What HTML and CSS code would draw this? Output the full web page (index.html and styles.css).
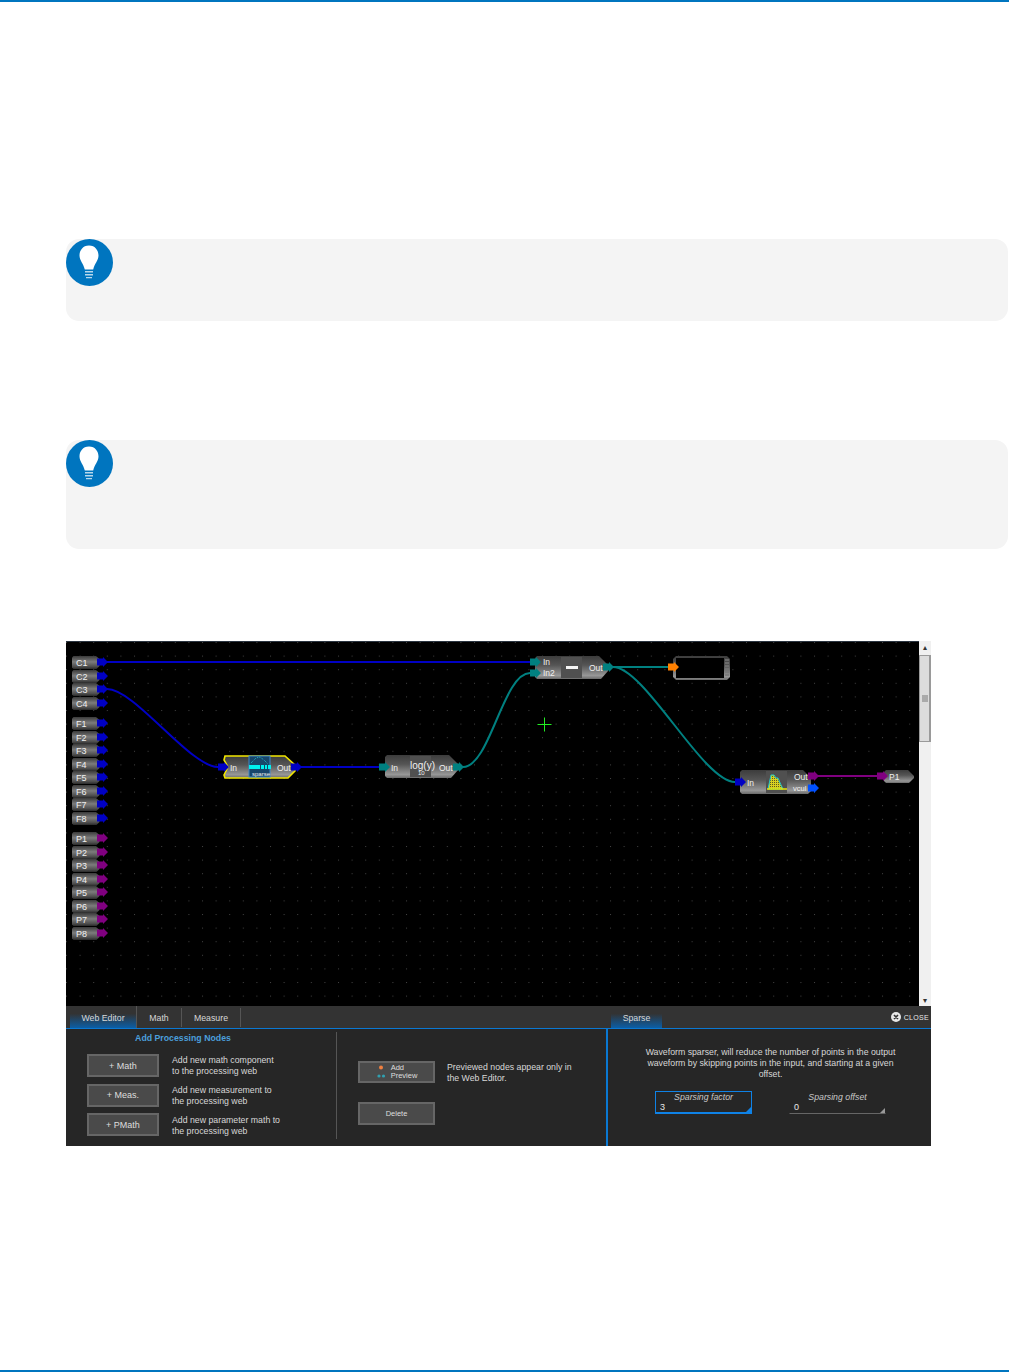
FILE: index.html
```html
<!DOCTYPE html>
<html lang="en">
<head>
<meta charset="utf-8">
<title>Processing Web Editor</title>
<link rel="stylesheet" href="styles.css">
</head>
<body>
<header class="top-rule"></header>
<main class="page">
  <aside class="callout callout-short">
    <svg class="bulb" viewBox="0 0 47 47" aria-hidden="true">
      <circle cx="23.5" cy="23.5" r="23.5" class="bulb-disc"/>
      <path class="bulb-glass" d="M23 6.5C16.8 6.5 13.5 11.5 13.5 16.5C13.5 21.5 17.5 24.5 18.8 30.5H27.2C28.5 24.5 32.5 21.5 32.5 16.5C32.5 11.5 29.2 6.5 23 6.5Z"/>
      <path class="bulb-base" d="M19 32H27V33.5H19ZM19 35H27V36.5H19ZM20 38H26V39.2H20Z"/>
    </svg>
  </aside>
  <aside class="callout callout-tall">
    <svg class="bulb" viewBox="0 0 47 47" aria-hidden="true">
      <circle cx="23.5" cy="23.5" r="23.5" class="bulb-disc"/>
      <path class="bulb-glass" d="M23 6.5C16.8 6.5 13.5 11.5 13.5 16.5C13.5 21.5 17.5 24.5 18.8 30.5H27.2C28.5 24.5 32.5 21.5 32.5 16.5C32.5 11.5 29.2 6.5 23 6.5Z"/>
      <path class="bulb-base" d="M19 32H27V33.5H19ZM19 35H27V36.5H19ZM20 38H26V39.2H20Z"/>
    </svg>
  </aside>

  <figure class="shot">
    <div class="canvas-row">
      <svg class="canvas" viewBox="66 641 853 365" width="853" height="365" role="img" aria-label="Processing web diagram">
        <defs>
          <pattern id="dots" x="79.6" y="642" width="13.6" height="13.6" patternUnits="userSpaceOnUse">
            <rect x="0" y="0" width="1" height="1" class="dot"/>
          </pattern>
          <pattern id="histdots" x="0" y="0" width="2" height="2" patternUnits="userSpaceOnUse">
            <rect width="2" height="2" class="hist-yellow"/>
            <rect width="1" height="1" class="hist-dark"/>
          </pattern>
          <linearGradient id="pinfill" x1="0" y1="0" x2="0" y2="1">
            <stop offset="0" stop-color="#3a3a3a"/>
            <stop offset=".45" stop-color="#7c7c7c"/>
            <stop offset=".8" stop-color="#505050"/>
            <stop offset="1" stop-color="#2a2a2a"/>
          </linearGradient>
          <linearGradient id="nodefill" x1="0" y1="0" x2="0" y2="1">
            <stop offset="0" stop-color="#3c3c3c"/>
            <stop offset=".4" stop-color="#555"/>
            <stop offset=".85" stop-color="#979797"/>
            <stop offset="1" stop-color="#6a6a6a"/>
          </linearGradient>
          <path id="arrow" d="M0-3.5H6V-5L11 0L6 5V3.5H0Z"/>
          <path id="pin" d="M0 1.5L1.5 0H24L27.5 3V10L24.5 13H1.5L0 11.5Z"/>
        </defs>
        <rect x="66" y="641" width="853" height="365" class="canvas-bg"/>
        <rect x="66" y="641" width="853" height="365" fill="url(#dots)"/>
        <rect x="66" y="641" width="853" height="1" class="canvas-edge"/>

        <g class="wires">
          <path class="wire blue" d="M107 662H530"/>
          <path class="wire blue" d="M107 689C135 689 190 767 218 767"/>
          <path class="wire blue" d="M300 767H380"/>
          <path class="wire teal" d="M463 767C490 767 503 673 530 673"/>
          <path class="wire teal" d="M612 667H668"/>
          <path class="wire teal" d="M613 667C645 667 703 782 735 782"/>
          <path class="wire purple" d="M818 776H878"/>
        </g>

        <g class="pins">
          <use href="#pin" x="72" y="656"/><text x="76" y="665.5">C1</text>
          <use href="#pin" x="72" y="670"/><text x="76" y="679.5">C2</text>
          <use href="#pin" x="72" y="683"/><text x="76" y="692.5">C3</text>
          <use href="#pin" x="72" y="697"/><text x="76" y="706.5">C4</text>
          <use href="#pin" x="72" y="717"/><text x="76" y="726.5">F1</text>
          <use href="#pin" x="72" y="731"/><text x="76" y="740.5">F2</text>
          <use href="#pin" x="72" y="744"/><text x="76" y="753.5">F3</text>
          <use href="#pin" x="72" y="758"/><text x="76" y="767.5">F4</text>
          <use href="#pin" x="72" y="771"/><text x="76" y="780.5">F5</text>
          <use href="#pin" x="72" y="785"/><text x="76" y="794.5">F6</text>
          <use href="#pin" x="72" y="798"/><text x="76" y="807.5">F7</text>
          <use href="#pin" x="72" y="812"/><text x="76" y="821.5">F8</text>
          <use href="#pin" x="72" y="832"/><text x="76" y="841.5">P1</text>
          <use href="#pin" x="72" y="846"/><text x="76" y="855.5">P2</text>
          <use href="#pin" x="72" y="859"/><text x="76" y="868.5">P3</text>
          <use href="#pin" x="72" y="873"/><text x="76" y="882.5">P4</text>
          <use href="#pin" x="72" y="886"/><text x="76" y="895.5">P5</text>
          <use href="#pin" x="72" y="900"/><text x="76" y="909.5">P6</text>
          <use href="#pin" x="72" y="913"/><text x="76" y="922.5">P7</text>
          <use href="#pin" x="72" y="927"/><text x="76" y="936.5">P8</text>
        </g>
        <g class="fill-blue">
          <use href="#arrow" x="97" y="662"/><use href="#arrow" x="97" y="676"/><use href="#arrow" x="97" y="689"/><use href="#arrow" x="97" y="703"/>
          <use href="#arrow" x="97" y="723"/><use href="#arrow" x="97" y="737"/><use href="#arrow" x="97" y="750"/><use href="#arrow" x="97" y="764"/>
          <use href="#arrow" x="97" y="777"/><use href="#arrow" x="97" y="791"/><use href="#arrow" x="97" y="804"/><use href="#arrow" x="97" y="818"/>
        </g>
        <g class="fill-purple">
          <use href="#arrow" x="97" y="838"/><use href="#arrow" x="97" y="852"/><use href="#arrow" x="97" y="865"/><use href="#arrow" x="97" y="879"/>
          <use href="#arrow" x="97" y="892"/><use href="#arrow" x="97" y="906"/><use href="#arrow" x="97" y="919"/><use href="#arrow" x="97" y="933"/>
        </g>

        <!-- sparse node -->
        <g class="node">
          <path class="node-selected" d="M225 756H285L295 765V771L288 778H225L224 775L228 767L224 760Z"/>
          <rect x="249" y="756" width="21" height="21" class="icon-sparse"/>
          <path class="icon-wave" d="M251 763L256 758L260 757L264 760L268 764"/>
          <rect x="249" y="765" width="22" height="4" class="icon-cyan"/>
          <path class="icon-gaps" d="M260.5 765V769M264.5 765V769M267.5 765V769"/>
          <text x="252" y="776" class="tiny">sparse</text>
          <text x="230" y="770.5">In</text><text x="277" y="770.5">Out</text>
          <use href="#arrow" class="fill-blue" x="218" y="767"/>
          <use href="#arrow" class="fill-blue" x="291" y="767"/>
        </g>

        <!-- log node -->
        <g class="node">
          <path class="node-body" d="M387 755H449L458 764V770L451 778H387L385 776V757Z"/>
          <rect x="410" y="756" width="21" height="21" class="icon-grey"/>
          <text x="410" y="769" class="log">log(y)</text>
          <text x="418" y="775" class="tiny">10</text>
          <text x="391" y="770.5">In</text><text x="439" y="770.5">Out</text>
          <use href="#arrow" class="fill-teal" x="379" y="767"/>
          <use href="#arrow" class="fill-teal" x="453" y="767"/>
        </g>

        <!-- minus node -->
        <g class="node">
          <path class="node-body" d="M537 656H599L608 665V671L601 679H537L535 677V658Z"/>
          <rect x="561" y="657" width="21" height="21" class="icon-grey"/>
          <rect x="566" y="666" width="12" height="3" class="icon-white"/>
          <text x="543" y="665">In</text><text x="543" y="676">In2</text><text x="589" y="670.5">Out</text>
          <use href="#arrow" class="fill-teal" x="530" y="662"/>
          <use href="#arrow" class="fill-teal" x="530" y="673"/>
          <use href="#arrow" class="fill-teal" x="603" y="667"/>
        </g>

        <!-- preview node -->
        <g class="node">
          <path class="node-body" d="M676 656H727L730 659V677L727 680H676L673 677V659Z"/>
          <rect x="676" y="658" width="48" height="20" class="canvas-bg"/>
          <path class="preview-ticks" d="M725 660H729M725 663H729M725 666H729M725 669H729M725 672H729M725 675H729"/>
          <use href="#arrow" class="fill-orange" x="668" y="667"/>
        </g>

        <!-- histogram node -->
        <g class="node">
          <path class="node-body" d="M742 770H803L811 778V791L808 794H742L740 792V772Z"/>
          <rect x="766" y="771" width="21" height="22" class="icon-grey"/>
          <path class="hist" d="M768 789L771 775H774L776 778H778L781 785L783 789Z"/>
          <path class="hist-axis" d="M767 789H787"/>
          <text x="747" y="786">In</text><text x="794" y="779.5">Out</text><text x="793" y="791" class="small">vcul</text>
          <use href="#arrow" class="fill-blue" x="735" y="782"/>
          <use href="#arrow" class="fill-purple" x="808" y="776"/>
          <use href="#arrow" class="fill-bright" x="808" y="788"/>
        </g>

        <!-- P1 output -->
        <g class="node">
          <path class="node-body" d="M886 770H908L914 776V778L909 783H886L884 781V772Z"/>
          <text x="889" y="780">P1</text>
          <use href="#arrow" class="fill-purple" x="877" y="776"/>
        </g>

        <path class="cursor" d="M537.5 724.5H551.5M544.5 717.5V731.5"/>
      </svg>
      <div class="scrollbar">
        <span class="scroll-arrow">&#9652;</span>
        <div class="scroll-thumb"><span class="scroll-grip"></span></div>
        <span class="scroll-arrow scroll-arrow-end">&#9662;</span>
      </div>
    </div>

    <section class="panel">
      <nav class="tabbar">
        <div class="tabs">
          <span class="tab tab-active tab-web">Web Editor</span>
          <span class="tab tab-math">Math</span>
          <span class="tab tab-measure">Measure</span>
        </div>
        <span class="tab tab-active tab-sparse">Sparse</span>
        <span class="close">
          <svg class="close-icon" viewBox="0 0 10 10" aria-hidden="true"><circle cx="5" cy="5" r="5" class="close-disc"/><path class="close-x" d="M3 3L7 7M7 3L3 7"/></svg>
          CLOSE
        </span>
      </nav>
      <div class="panel-body">
        <div class="left-pane">
          <div class="add-col">
            <h3 class="add-title">Add Processing Nodes</h3>
            <div class="add-row"><button class="btn">+ Math</button><p class="desc">Add new math component<br>to the processing web</p></div>
            <div class="add-row"><button class="btn">+ Meas.</button><p class="desc desc-nudge-1">Add new measurement to<br>the processing web</p></div>
            <div class="add-row"><button class="btn">+ PMath</button><p class="desc desc-nudge-2">Add new parameter math to<br>the processing web</p></div>
          </div>
          <div class="preview-col">
            <div class="preview-row">
              <button class="btn btn-wide btn-preview">
                <svg class="preview-icon" viewBox="0 0 10 14" aria-hidden="true"><circle cx="5" cy="2.5" r="2" class="pi-orange"/><circle cx="3" cy="11" r="1.6" class="pi-teal"/><circle cx="7.5" cy="11" r="1.6" class="pi-teal"/></svg>
                <span class="preview-label">Add<br>Preview</span>
              </button>
              <p class="desc desc-low">Previewed nodes appear only in<br>the Web Editor.</p>
            </div>
            <button class="btn btn-wide btn-delete">Delete</button>
          </div>
        </div>
        <div class="right-pane">
          <p class="sparse-desc">Waveform sparser, will reduce the number of points in the output<br>waveform by skipping points in the input, and starting at a given<br>offset.</p>
          <div class="fields">
            <div class="field field-active"><span class="field-label">Sparsing factor</span><span class="field-value">3</span><i class="corner"></i></div>
            <div class="field"><span class="field-label">Sparsing offset</span><span class="field-value">0</span><i class="corner"></i></div>
          </div>
        </div>
      </div>
    </section>
  </figure>
</main>
<footer class="bottom-rule"></footer>
</body>
</html>
```
FILE: styles.css
```css
* { box-sizing: border-box; }
html, body { margin: 0; padding: 0; }
body {
  width: 1009px;
  height: 1372px;
  background: #fff;
  display: flex;
  flex-direction: column;
  font-family: "Liberation Sans", Arial, sans-serif;
  overflow: hidden;
}
.top-rule { height: 2px; background: #0075bf; flex: none; }
.bottom-rule { height: 2px; background: #0075bf; flex: none; margin-top: auto; }
.page { padding: 237px 1px 0 66px; }

.callout { position: relative; background: #f4f4f4; border-radius: 13px; }
.callout-short { height: 82px; }
.callout-tall { height: 109px; margin-top: 119px; }
.bulb { position: absolute; left: 0; top: 0; width: 47px; height: 47px; display: block; }
.bulb-disc { fill: #0075bf; }
.bulb-glass { fill: #fff; }
.bulb-base { fill: #b8d8ec; }

.shot { margin: 92px 0 0; width: 865px; }
.canvas-row { display: flex; height: 365px; }
.canvas { display: block; flex: none; }
.canvas-bg { fill: #000; }
.canvas-edge { fill: #2a3440; }
.dot { fill: #424242; }

.wire { fill: none; stroke-width: 2; }
.wire.blue { stroke: #0000c4; }
.wire.teal { stroke: #008080; }
.wire.purple { stroke: #800080; }

.fill-blue { fill: #0000c4; }
.fill-purple { fill: #800080; }
.fill-teal { fill: #008080; }
.fill-orange { fill: #ff8000; }
.fill-bright { fill: #0050ff; }

.pins use { fill: url(#pinfill); }
.pins text {
  fill: #f0f0f0;
  font-family: "Liberation Sans", Arial, sans-serif;
  font-size: 9px;
}
.node text {
  fill: #f0f0f0;
  font-family: "Liberation Sans", Arial, sans-serif;
  font-size: 8.5px;
}
.node-body { fill: url(#nodefill); }
.node-selected { fill: url(#nodefill); stroke: #f2e600; stroke-width: 1.6; }
.icon-grey { fill: #505050; }
.icon-white { fill: #f4f4f4; }
.icon-sparse { fill: #17466b; stroke: #3f87c8; stroke-width: 1; }
.icon-cyan { fill: #00f0f0; }
.icon-gaps { stroke: #17466b; stroke-width: 1; fill: none; }
.icon-wave { fill: none; stroke: #22b8c8; stroke-width: 1; stroke-dasharray: 1 1; }
.node text.tiny { font-size: 6px; }
.node text.small { font-size: 7.5px; }
.node text.log { font-size: 10px; }
.preview-ticks { stroke: #777; stroke-width: 1.4; fill: none; }
.hist { fill: url(#histdots); stroke: #20c8c8; stroke-width: 1; }
.hist-yellow { fill: #d8d020; }
.hist-dark { fill: #5a5a20; }
.hist-axis { stroke: #f5f000; stroke-width: 1.4; fill: none; }
.cursor { stroke: #22ee22; stroke-width: 1; fill: none; }

.scrollbar {
  width: 12px;
  background: #f0f0f0;
  display: flex;
  flex-direction: column;
  align-items: stretch;
}
.scroll-arrow {
  height: 14px;
  flex: none;
  font-size: 8px;
  line-height: 14px;
  text-align: center;
  color: #333;
}
.scroll-arrow-end { margin-top: auto; height: 10px; line-height: 10px; }
.scroll-thumb {
  height: 87px;
  flex: none;
  background: #dcdcdc;
  border: 1px solid #9a9a9a;
  border-right-width: 2px;
  display: flex;
  align-items: center;
  justify-content: center;
}
.scroll-grip { width: 6px; height: 7px; background: #aaa; }

.panel { color: #d8d8d8; font-size: 9px; }
.tabbar {
  height: 23px;
  background: #333;
  border-bottom: 1px solid #0a78d2;
  display: flex;
  align-items: stretch;
  padding-left: 4px;
}
.tabs { display: flex; width: 541px; flex: none; }
.tab { display: flex; align-items: center; justify-content: center; font-size: 8.75px; padding-top: 1px; }
.tab-web { width: 67px; }
.tab-math { width: 45px; }
.tab-measure { width: 59px; }
.tab-web, .tab-math, .tab-measure { border-right: 1px solid #555; margin: 2px 0 1px; }
.tab-active { background: linear-gradient(#333 35%, #0b5ea6); }
.tab-web { margin: 0; border-right: 1px solid #555; }
.tab-sparse { width: 51px; }
.close {
  margin-left: auto;
  padding-right: 2px;
  display: flex;
  align-items: center;
  gap: 3px;
  font-size: 7px;
  letter-spacing: .3px;
  color: #e8e8e8;
}
.close-icon { width: 10px; height: 10px; display: block; }
.close-disc { fill: #e8e8e8; }
.close-x { stroke: #333; stroke-width: 1.6; fill: none; }

.panel-body { height: 117px; background: #262626; display: flex; }
.left-pane { width: 542px; flex: none; display: flex; border-right: 2px solid #0a78d2; }
.add-col { width: 271px; flex: none; padding: 1px 0 0 21px; margin-top: 3px; margin-bottom: 7px; border-right: 1px solid #555; }
.add-title {
  margin: 0 0 11px;
  width: 192px;
  text-align: center;
  font-size: 8.75px;
  line-height: 10px;
  font-weight: 700;
  color: #4b9fdc;
}
.add-row { display: flex; align-items: center; gap: 13px; height: 23px; margin-bottom: 6.5px; }
.btn {
  width: 72px;
  height: 23px;
  flex: none;
  padding: 0;
  background: #4a4a4a;
  border: 2px solid #666;
  color: #dedede;
  font: 9px "Liberation Sans", Arial, sans-serif;
}
.desc { margin: 0; font-size: 8.75px; line-height: 11px; white-space: nowrap; }
.desc-low { padding-top: 3px; }
.desc-nudge-1 { padding-top: 2px; }
.desc-nudge-2 { padding-top: 3px; }
.preview-col { padding: 30px 0 0 21px; }
.preview-row { display: flex; align-items: center; gap: 12px; margin-bottom: 18px; }
.btn-wide { width: 77px; font-size: 7.5px; }
.btn-preview { display: flex; align-items: center; justify-content: center; gap: 5px; height: 22px; }
.preview-icon { width: 10px; height: 14px; display: block; }
.pi-orange { fill: #f08040; }
.pi-teal { fill: #30a0b0; }
.preview-label { text-align: left; line-height: 8px; padding-top: 1px; }

.right-pane { flex: 1; padding-top: 18px; display: flex; flex-direction: column; align-items: center; }
.sparse-desc { margin: 0 0 0 2px; text-align: center; font-size: 8.75px; line-height: 11px; white-space: nowrap; }
.fields { display: flex; gap: 37px; margin: 11px 0 0 2px; }
.field {
  position: relative;
  width: 97px;
  height: 23px;
  border: 1px solid transparent;
  border-bottom: 1px solid #666;
  display: flex;
  flex-direction: column;
  font-style: normal;
}
.field-active { border: 1px solid #0f82e6; border-bottom-width: 2px; }
.field-label { text-align: center; font-style: italic; font-size: 8.75px; line-height: 10px; color: #c8c8c8; }
.field-value { padding-left: 4px; font-size: 9px; line-height: 10px; color: #e8e8e8; }
.corner {
  position: absolute;
  right: 0;
  bottom: 0;
  width: 0;
  height: 0;
  border-left: 5px solid transparent;
  border-bottom: 5px solid #999;
}
.field-active .corner { border-bottom-color: #0f82e6; }
```
